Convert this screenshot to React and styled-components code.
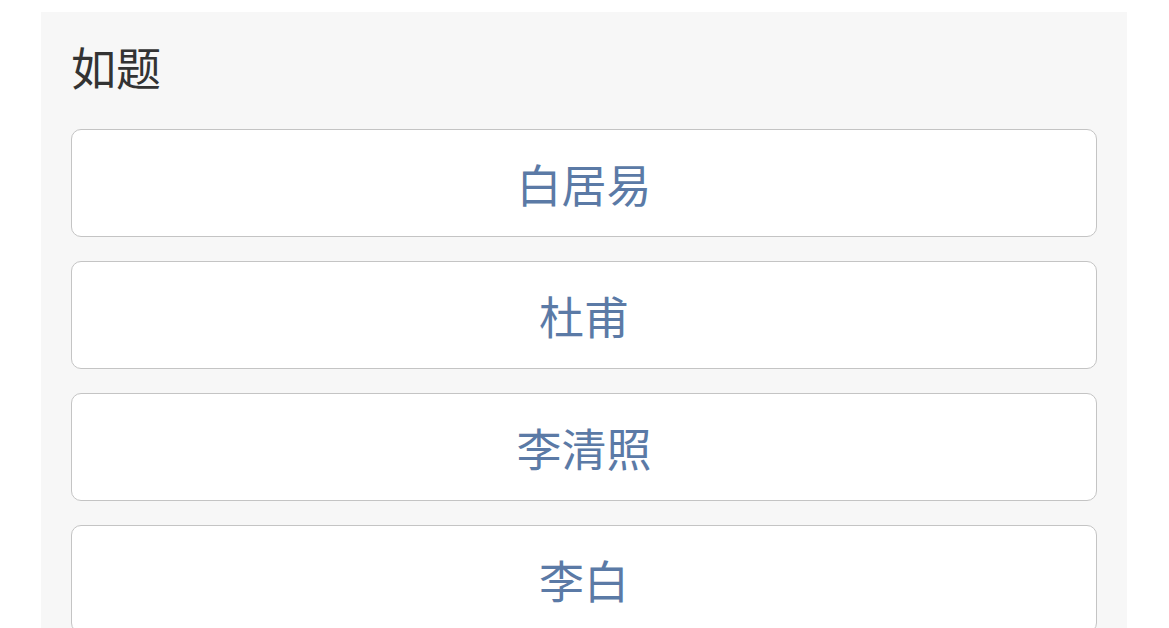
import React from 'react';
import styled, { createGlobalStyle } from 'styled-components';

const GlobalStyle = createGlobalStyle`
  html, body {
    margin: 0;
    padding: 0;
    background: #ffffff;
    font-family: "Noto Sans CJK SC", "Noto Sans", sans-serif;
  }
`;

const Page = styled.div`
  padding: 12px 42px 0 41px;
  height: 628px;
  box-sizing: border-box;
  overflow: hidden;
`;

const Panel = styled.div`
  background: #f7f7f7;
  padding: 26px 30px 40px;
  min-height: 100%;
  box-sizing: border-box;
`;

const Title = styled.h1`
  margin: 0 0 33px;
  font-size: 45px;
  line-height: 58px;
  font-weight: 400;
  color: #333333;
`;

const Options = styled.div`
  display: flex;
  flex-direction: column;
  gap: 24px;
`;

const Option = styled.button`
  height: 108px;
  width: 100%;
  background: #ffffff;
  border: 1px solid #c4c4c4;
  border-radius: 10px;
  font-family: inherit;
  font-size: 45px;
  color: #5b7aa6;
  cursor: pointer;
  padding: 0;
`;

const answers = ['白居易', '杜甫', '李清照', '李白'];

export default function App() {
  return (
    <>
      <GlobalStyle />
      <Page>
        <Panel>
          <Title>如题</Title>
          <Options>
            {answers.map(a => (
              <Option key={a}>{a}</Option>
            ))}
          </Options>
        </Panel>
      </Page>
    </>
  );
}
